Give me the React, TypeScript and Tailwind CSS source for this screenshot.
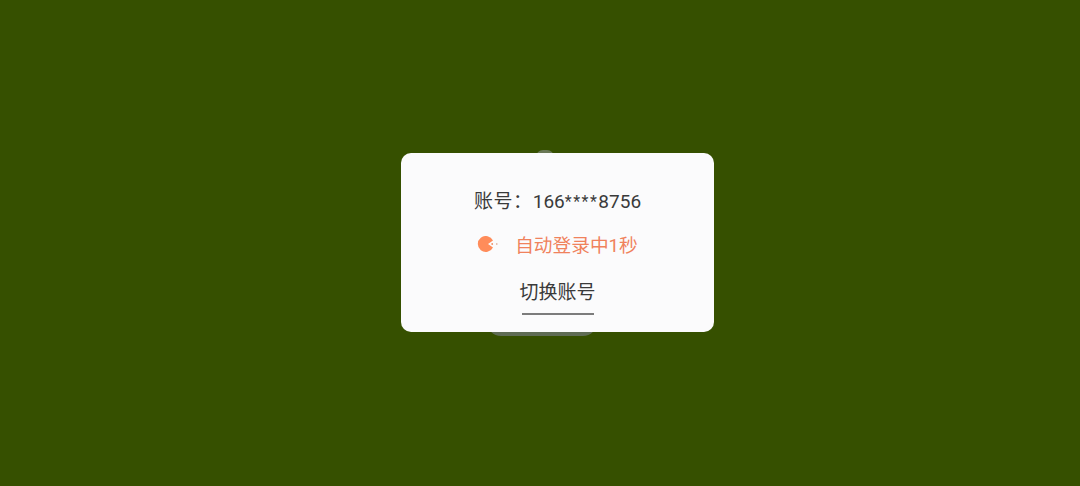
export default function App() {
  return (
    <div className="w-[1080px] h-[486px] overflow-hidden bg-[#365000] pl-[401px] pt-[153px] font-['Roboto','Noto_Sans_CJK_SC',sans-serif]">
      <div className="relative w-[313px] h-[179px]">
        {/* bits of the screen behind the dialog */}
        <div className="absolute left-[135px] top-[-3px] w-[18px] h-[14px] rounded-full bg-[#6a7856]" />
        <div className="absolute left-[86px] bottom-[-4px] w-[110px] h-[14px] rounded-b-[16px] bg-[#5f6c55]" />

        <div className="relative w-full h-full rounded-[10px] bg-[#fbfbfc] flex flex-col items-center">
          <div className="mt-[37px] h-[24px] leading-[24px] text-[19px] text-[#3a3a3a] whitespace-nowrap">
            <span className="tracking-[0.6px]">账号：</span>166<span className="text-[16px] tracking-[1.5px] align-[1px]">****</span>8756
          </div>
          <div className="mt-[19px] h-[26px] flex items-center text-[18.7px] text-[#f0825c] whitespace-nowrap">
            <svg width="24" height="20" viewBox="0 0 24 20" className="mr-[14px]">
              <path d="M16 4.5 A8 8 0 1 0 16 11.5 L11 8 Z" fill="#ff8c5a" />
              <circle cx="15.2" cy="8" r="0.9" fill="#f08c64" />
              <circle cx="19.8" cy="8" r="0.8" fill="#d9987c" />
            </svg>
            <span>自动登录中1秒</span>
          </div>
          <div className="mt-[22px] text-[19px] leading-[24px] text-[#3a3a3a] whitespace-nowrap">切换账号</div>
          <div className="mt-[8px] w-[72px] h-[2px] bg-[#7c7c7c]" />
        </div>
      </div>
    </div>
  );
}
